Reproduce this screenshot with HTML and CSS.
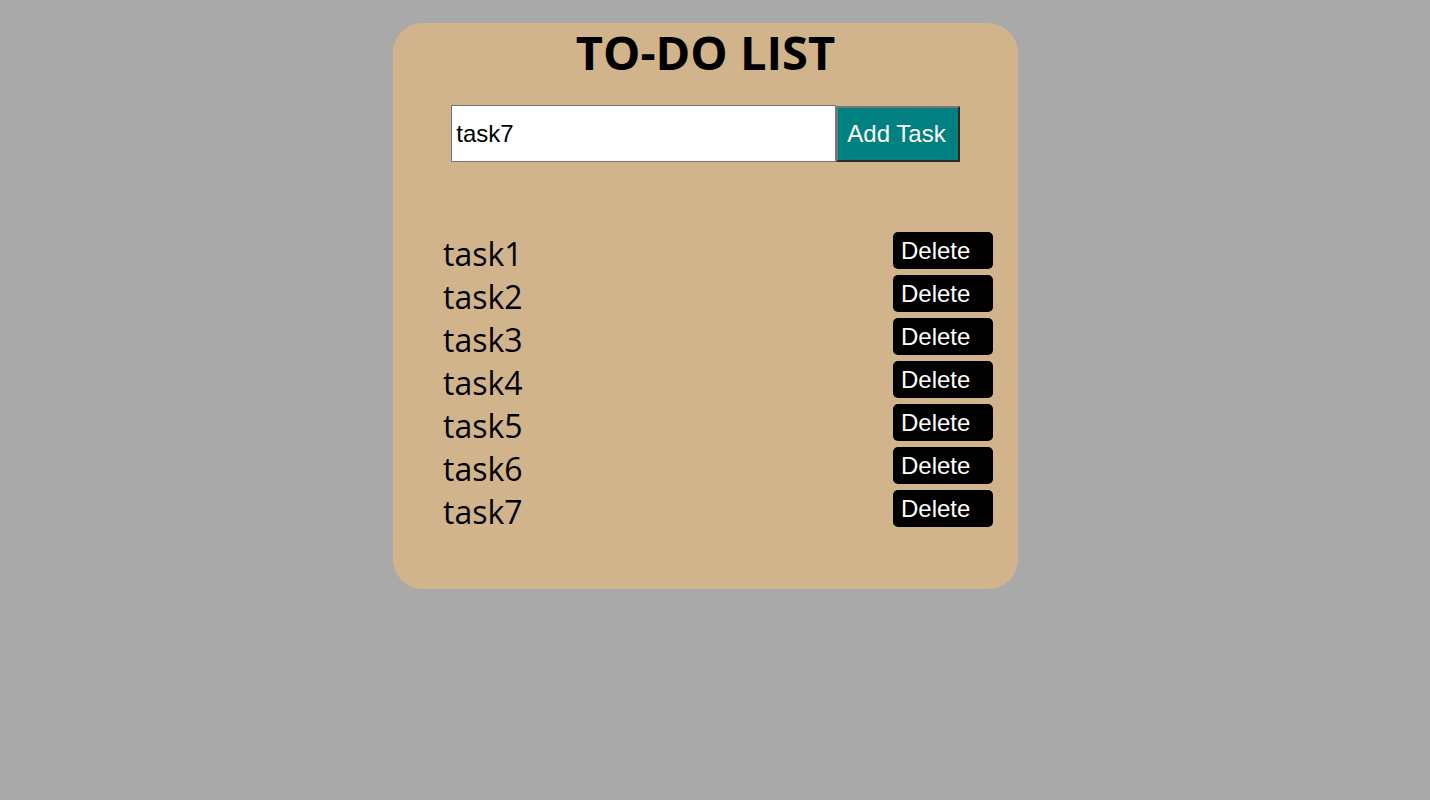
FILE: index.html
```html
<!DOCTYPE html>
<html lang="en">
<head>
    <meta charset="UTF-8">
    <meta name="viewport" content="width=device-width, initial-scale=1.0">
    <title>To-Do List</title>
    <link rel="stylesheet" href="styles.css">
</head>
<body>
    <div class="container">
        <h1>TO-DO LIST</h1>

        <form id="taskForm" class="task-form">
            <input type="text" id="taskInput" value="task7">
            <button type="submit" class="add-btn">Add Task</button>
        </form>

        <ul id="taskList" class="task-list">
            <li><span>task1</span><button class="delete-btn">Delete</button></li>
            <li><span>task2</span><button class="delete-btn">Delete</button></li>
            <li><span>task3</span><button class="delete-btn">Delete</button></li>
            <li><span>task4</span><button class="delete-btn">Delete</button></li>
            <li><span>task5</span><button class="delete-btn">Delete</button></li>
            <li><span>task6</span><button class="delete-btn">Delete</button></li>
            <li><span>task7</span><button class="delete-btn">Delete</button></li>
        </ul>
    </div>
</body>
</html>
```

FILE: styles.css
```css
body {
    margin: 0;
    padding: 0 19px 0 0;
    background-color: #a9a9a9;
    font-family: "Comic Sans MS", "Open Sans", sans-serif;
}
.container {
    width: 625px;
    margin: 23px auto 0;
    padding: 2px 0 62px;
    box-sizing: border-box;
    background-color: #d2b48c;
    border-radius: 30px;
}
h1 {
    margin: 0;
    font-size: 47px;
    line-height: 54px;
    font-weight: bold;
    text-align: center;
    color: #000;
}
.task-form {
    display: flex;
    justify-content: center;
    align-items: center;
    margin: 26px 0 0;
}
.task-form input {
    width: 385px;
    height: 57px;
    box-sizing: border-box;
    padding: 0 4px;
    border: 1px solid #767676;
    font-family: "Liberation Sans", Arial, sans-serif;
    font-size: 24px;
    color: #000;
    background: #fff;
}
.add-btn {
    height: 56px;
    margin-top: 1px;
    padding: 0 12px 0 9px;
    background-color: #008080;
    color: #fff;
    border-style: solid;
    border-width: 2px;
    border-color: #767676 #2b2b2b #2b2b2b #767676;
    font-family: "Liberation Sans", Arial, sans-serif;
    font-size: 24px;
    cursor: pointer;
}
.task-list {
    list-style: none;
    margin: 70px 0 0;
    padding: 0 25px 0 50px;
}
.task-list li {
    display: flex;
    justify-content: space-between;
    align-items: flex-start;
    height: 37px;
    margin-bottom: 6px;
}
.task-list li:last-child {
    margin-bottom: 0;
}
.task-list span {
    font-size: 32px;
    line-height: 1;
    padding-top: 6px;
}
.delete-btn {
    width: 100px;
    height: 37px;
    padding: 0 8px;
    text-align: left;
    background-color: #000;
    color: #fff;
    border: none;
    border-radius: 5px;
    font-family: "Liberation Sans", Arial, sans-serif;
    font-size: 24px;
    cursor: pointer;
}
```
